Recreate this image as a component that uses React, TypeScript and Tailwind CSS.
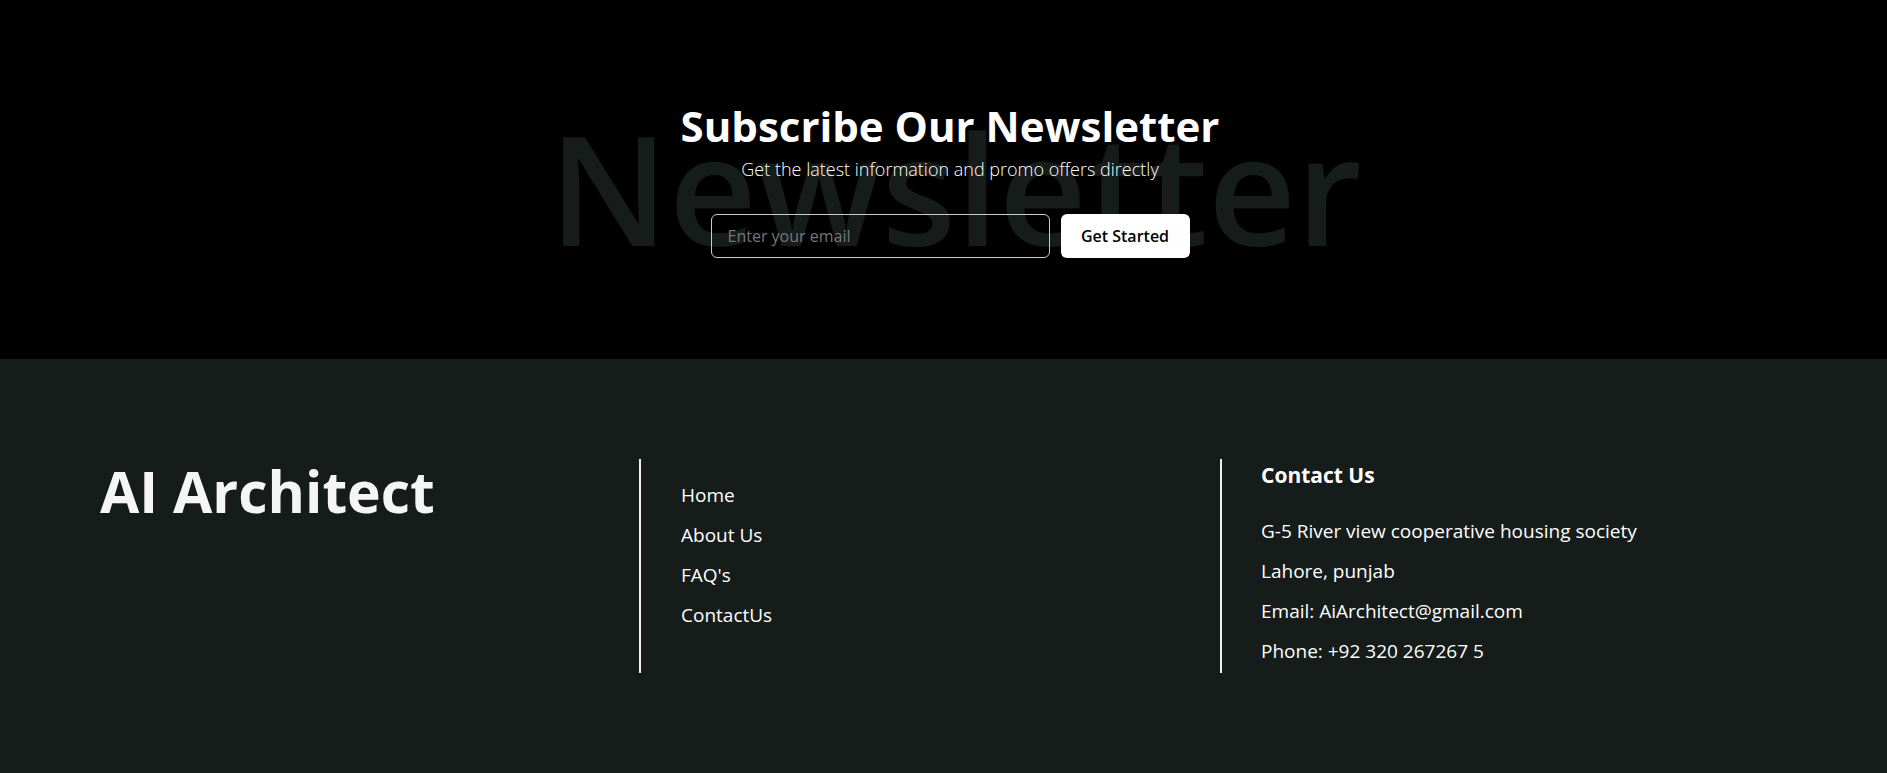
const links = ["Home", "About Us", "FAQ's", "ContactUs"];

const contact = [
  "G-5 River view cooperative housing society",
  "Lahore, punjab",
  "Email: AiArchitect@gmail.com",
  "Phone: +92 320 267267 5",
];

function Newsletter() {
  return (
    <section className="relative h-[359px] overflow-hidden bg-black">
      {/* big faded word behind the heading */}
      <span className="pointer-events-none absolute left-1/2 top-[110px] translate-x-[calc(-50%+12px)] select-none text-[153px] font-semibold leading-none text-[#151c1a]">
        Newsletter
      </span>
      <div className="relative flex flex-col items-center pl-[13px] pt-[105px]">
        <h2 className="text-[42px] font-bold leading-none text-white">
          Subscribe Our Newsletter
        </h2>
        <p className="mt-2 text-lg font-light text-white">
          Get the latest information and promo offers directly
        </p>
        <form
          className="mt-[31px] flex gap-[11px]"
          onSubmit={(e) => e.preventDefault()}>
          <input
            type="email"
            placeholder="Enter your email"
            className="h-[44px] w-[339px] rounded-md border border-[#cccccc] bg-transparent px-4 text-base text-white outline-none placeholder:text-[#777777]"
          />
          <button
            type="submit"
            className="h-[44px] w-[129px] rounded-md bg-white text-base font-semibold text-black">
            Get Started
          </button>
        </form>
      </div>
    </section>
  );
}

function Footer() {
  return (
    <footer className="bg-[#151c1a] px-[100px] py-[100px] text-white">
      <div className="flex">
        <div className="w-[539px] shrink-0">
          <h1 className="mt-[4px] text-[57px] font-bold leading-none text-[#f5f5f5]">
            AI Architect
          </h1>
        </div>
        <ul className="flex w-[581px] shrink-0 flex-col gap-3 border-l-2 border-[#eeeeee] pl-10 pt-[22px]">
          {links.map((l) => (
            <li key={l} className="text-[19px] leading-7">
              <a href="#">{l}</a>
            </li>
          ))}
        </ul>
        <div className="flex-1 border-l-2 border-[#eeeeee] pb-2 pl-[39px]">
          <h3 className="text-[21px] font-bold leading-8">Contact Us</h3>
          <ul className="mt-[26px] flex flex-col gap-3">
            {contact.map((c) => (
              <li key={c} className="text-[19px] leading-7">
                {c}
              </li>
            ))}
          </ul>
        </div>
      </div>
    </footer>
  );
}

export default function App() {
  return (
    <div className="min-h-screen bg-[#151c1a] font-['Open_Sans',sans-serif]">
      <Newsletter />
      <Footer />
    </div>
  );
}
